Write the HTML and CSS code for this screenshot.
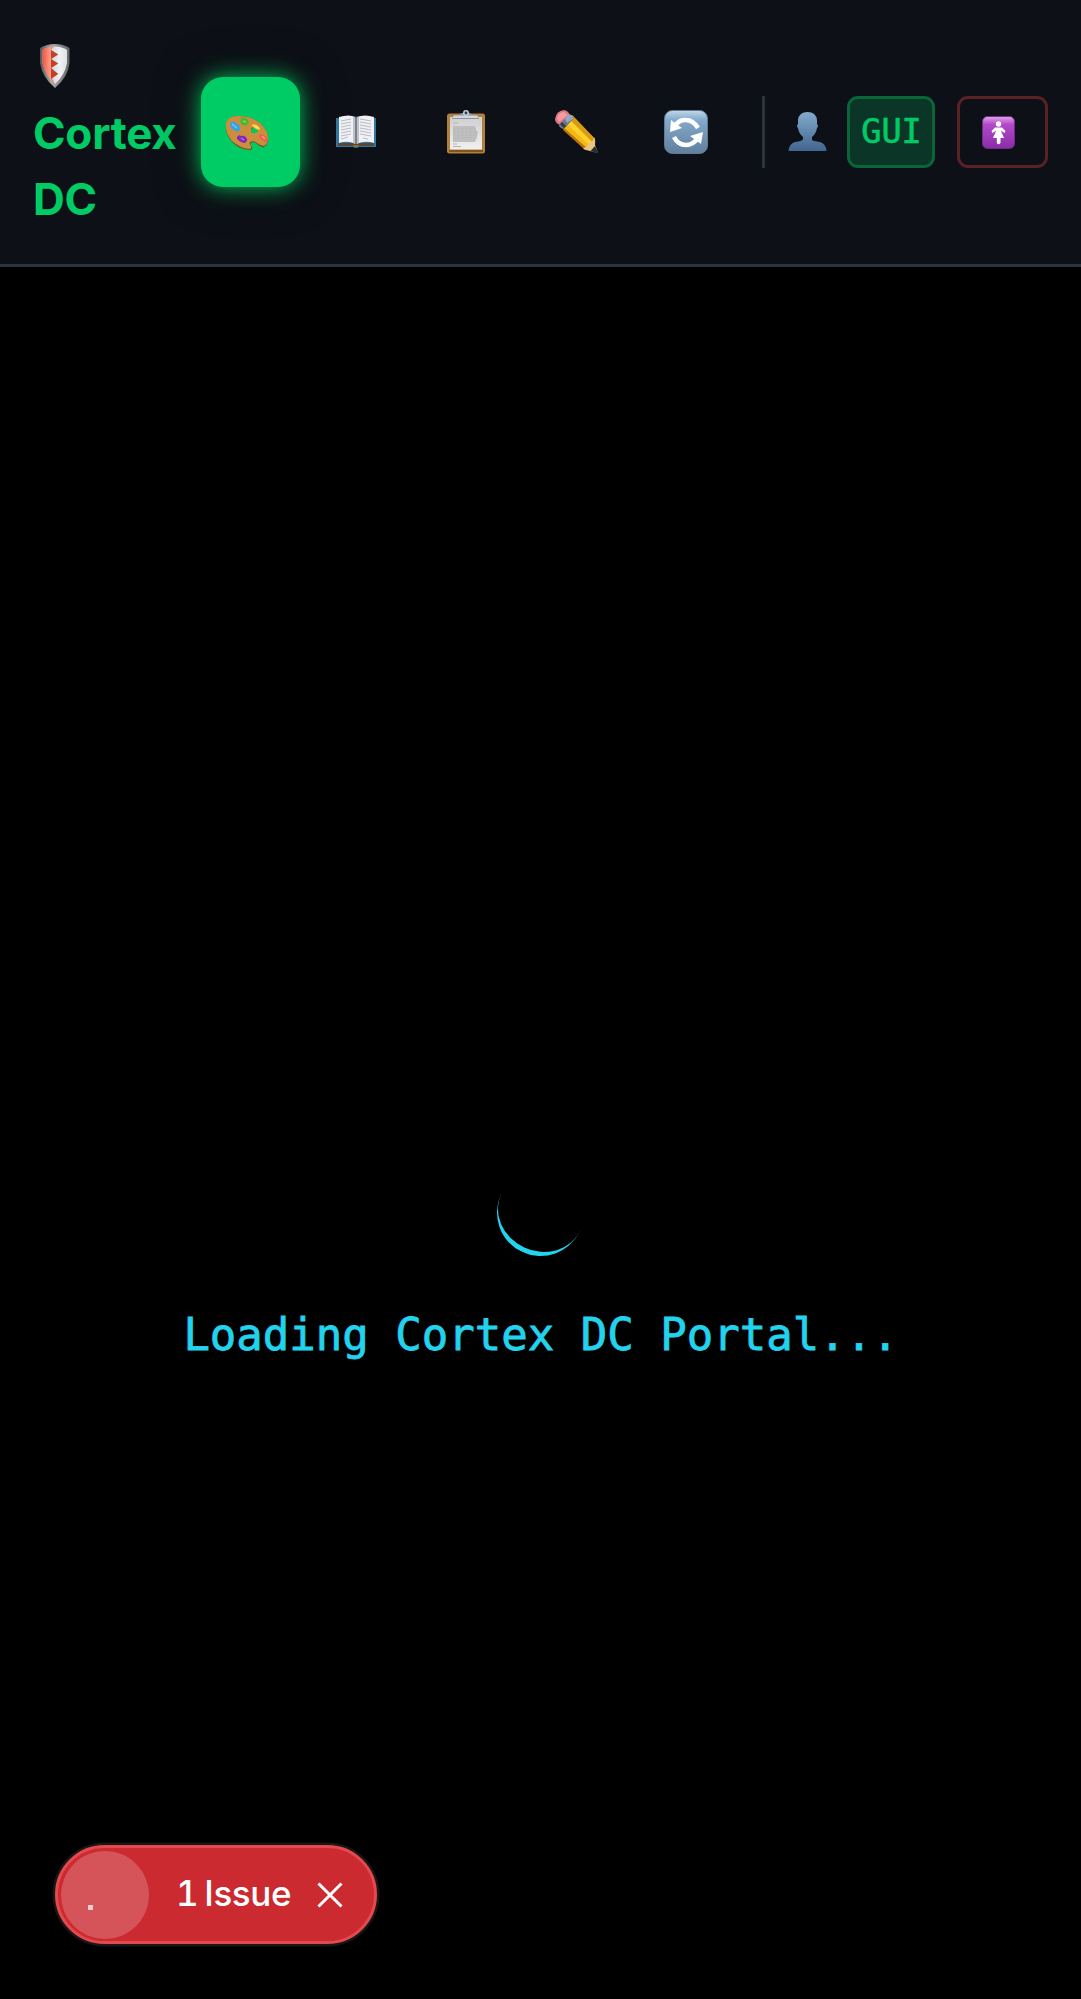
FILE: index.html
```html
<!DOCTYPE html>
<html lang="en">
<head>
<meta charset="utf-8">
<title>Cortex DC Portal</title>
<link rel="stylesheet" href="styles.css">
</head>
<body>
<header class="header">
  <div class="brand">
    <div class="brand-mark">
      <svg width="32" height="46" viewBox="0 0 32 46">
        <defs>
          <linearGradient id="rim" x2="1"><stop stop-color="#555"/><stop offset=".4" stop-color="#aaa"/><stop offset="1" stop-color="#666"/></linearGradient>
          <linearGradient id="red" x2="1"><stop stop-color="#f0553f"/><stop offset=".5" stop-color="#ff9c86"/><stop offset="1" stop-color="#d33c22"/></linearGradient>
          <linearGradient id="silver" x2="1"><stop stop-color="#b3b9bf"/><stop offset=".7" stop-color="#eef2f5"/><stop offset="1" stop-color="#dde2e6"/></linearGradient>
        </defs>
        <path d="M16 1Q24 1 30.500 5V20Q29 34 16 45Q3 34 1 20V5Q8 1 16 1Z" fill="url(#rim)"/>
        <path d="M16 3.500Q23 3.500 28 7V20Q26 32 16 41Q6 32 3.500 20V7Q9 3.500 16 3.500Z" fill="url(#silver)"/>
        <path d="M15 3.600L12 7L19 11.500L12 16L19 20.500L12 25L19 31L13 35L16 41Q6 32 3.500 20V7Q8 4 15 3.600Z" fill="url(#red)"/>
        <path d="M12 7L19 11.500L12 16L19 20.500L12 25L19 31L12 36V7Z" fill="#c24128"/>
      </svg>
    </div>
    <div>Cortex</div>
    <div>DC</div>
  </div>
  <nav class="nav">
    <button class="nav-item active" aria-label="GUI">
      <svg width="44" height="44" viewBox="0 0 44 44">
        <path d="M1 15Q2 6 14 6Q28 6 37 15Q43 22 43 28Q43 35 39 37Q36 38 32 34Q28 31 26 33Q25 35 27 37Q28 40 25 40Q15 40 7 32Q0 24 1 15ZM26 21Q26 24 30 24Q33 23 33 20Q31 18 28 18Q26 19 26 21Z" fill="#75512a" fill-rule="evenodd"/>
        <path d="M1 14Q2 5.500 14 6Q28 6 37 15Q43 22 43 27Q43 34 39 36Q36 36 32 33Q28 30 25 32Q24 34 26 36Q27 39 24 39Q15 38 7 31Q0 23 1 14ZM26 20Q26 24 30 23Q33 23 33 20Q31 17 28 17Q26 18 26 20Z" fill="#cc8d3c" fill-rule="evenodd"/>
        <path d="M5 13Q8 10 11 13Q16 15 15 20Q12 23 9 20Q5 19 5 13Z" fill="#36a4e1"/>
        <path d="M16 8Q19 6 22 9Q25 12 22 15Q18 17 15 12Z" fill="#48b82c"/>
        <path d="M28 14Q31 14 34 17Q36 19 34 20Q30 19 27 16Z" fill="#f5d13a"/>
        <path d="M12 27Q14 24 16 26Q20 25 22 29Q23 30 20 33Q16 33 12 29Z" fill="#8426c0"/>
        <path d="M34 25Q37 23 40 26Q44 30 42 32Q38 32 34 27Z" fill="#ed5e4c"/>
        <path d="M7 14L12 18M18 11L21 12M30 16L33 18M16 28L19 30M37 26L40 29" stroke="#fff" stroke-opacity=".35" stroke-width="1.500"/>
      </svg>
    </button>
    <button class="nav-item" aria-label="Docs">
      <svg width="44" height="44" viewBox="0 0 44 44">
        <path d="M1 8H41V37H24Q21 39 18 37H1Z" fill="#32779e"/>
        <path d="M3 33H39V36H24Q21 37 18 36H3Z" fill="#55483a"/>
        <path d="M4 7Q14 4 20.500 7V34Q13 30 4 33Z" fill="#f0f1f5"/>
        <path d="M21.500 7Q30 4 39 7V33Q30 30 21.500 34Z" fill="#f0f1f5"/>
        <path d="M19 7V33M23 7V33" stroke="#aeb0b9" stroke-width="1.500"/>
        <path d="M21 6V34" stroke="#555" stroke-width="1"/>
        <path d="M6 11L16 9M6 14L16 12M6 17L16 15M6 20L16 18M6 23L16 21M6 26L16 24M6 29L13 27M25 9L36 11M25 12L36 14M25 15L36 17M25 18L36 20M25 21L36 23M25 24L36 26M28 28L33 29" stroke="#b9bac3" stroke-width="1"/>
        <path d="M18 35H24L23 37H19Z" fill="#92701c"/>
      </svg>
    </button>
    <button class="nav-item" aria-label="Projects">
      <svg width="44" height="44" viewBox="0 0 44 44">
        <defs><linearGradient id="paper" y2="1" x2="0"><stop stop-color="#cfcfcf"/><stop offset="1" stop-color="#f0f0f0"/></linearGradient></defs>
        <rect x="2" y="3.500" width="38" height="40" rx="2.500" fill="#b1803f"/>
        <path d="M4 40H38V42H4Z" fill="#80531f"/>
        <path d="M5 7H37V39.500H5Z" fill="url(#paper)"/>
        <path d="M8 16H30L31 20L33 22L32 27L30 32H8Z" fill="#bfbfbf"/>
        <path d="M8 13H13M8 34H12M8 36.500H16" stroke="#b5b5b5"/>
        <path d="M8 19H31M8 22H31M8 25H31M8 28H30" stroke="#b7b7b7" stroke-dasharray="3 1"/>
        <path d="M7 9Q7 5 13 5L17 3H25L28 5Q34 5 34 9Z" fill="#8d949c"/>
        <path d="M9 5.500H32L34 8H7Z" fill="#d1d6da"/>
        <circle cx="21" cy="3" r="2.200" fill="#333a42" stroke="#bed0df" stroke-width="1.600"/>
      </svg>
    </button>
    <button class="nav-item" aria-label="Create">
      <svg width="44" height="44" viewBox="0 0 44 44">
        <path d="M17 5L40 29L31 39L8 18Z" fill="#f4b915"/>
        <path d="M17 5L40 29L37 32L14 9Z" fill="#d99b13"/>
        <path d="M14 9L37 32L34 35L11 13Z" fill="#ffd12c"/>
        <path d="M9 18L32 38L29 39L8 20Z" fill="#bb750b"/>
        <path d="M39 27Q41 31 40 35L43 43L31 40Q27 39 29 38Q33 36 33 33Q38 33 39 27Z" fill="#e8c583"/>
        <path d="M40 36L43.500 43.500L35.500 41Z" fill="#272d37"/>
        <path d="M0 9Q1 1 9 0Q14 1 15 6L5 15Q0 13 0 9Z" fill="#df7582"/>
        <path d="M2 9Q3 2 9 2L13 5L4 12Z" fill="#f59ba1"/>
        <path d="M14 5L19 8L9 19Q4 18 4 15Z" fill="#697685"/>
        <path d="M14 4Q18 5 18 9L12 13L10 9Z" fill="#91a9c5"/>
        <path d="M6 13L10 17" stroke="#343a40" stroke-width="3"/>
      </svg>
    </button>
    <button class="nav-item refresh" aria-label="Refresh">
      <svg width="44" height="44" viewBox="0 0 44 44">
        <defs><linearGradient id="tile" y2="1" x2="0"><stop stop-color="#c1d8ea"/><stop offset=".22" stop-color="#83a9cb"/><stop offset="1" stop-color="#617f9d"/></linearGradient></defs>
        <rect x=".5" y=".5" width="43" height="43" rx="8" fill="url(#tile)" stroke="#617b92"/>
        <path d="M10 17Q15 9 22 10Q29 10 34 18" fill="none" stroke="#fff" stroke-width="4.500"/>
        <path d="M7 10L6 22L18 18Z" fill="#fff"/>
        <path d="M10 27Q14 35 22 35Q29 35 34 28" fill="none" stroke="#fff" stroke-width="4.500"/>
        <path d="M39 22L37 34L26 26Z" fill="#fff"/>
      </svg>
    </button>
  </nav>
  <div class="account">
    <svg class="person" width="44" height="44" viewBox="0 0 44 44">
      <defs><linearGradient id="bust" y2="1" x2="0"><stop stop-color="#83aacb"/><stop offset="1" stop-color="#41658f"/></linearGradient></defs>
      <path d="M21.500 2Q30 2 31 10V14Q33 16 31 18Q30 24 26 27V30Q27 31 34 32Q40 34 40.500 41H2.500Q3 34 9 32Q17 31 17 29V27Q13 24 12 18Q10 16 12 14V10Q13 2 21.500 2Z" fill="url(#bust)"/>
    </svg>
    <span class="badge">GUI</span>
    <button class="logout" aria-label="Log out">
      <svg width="33" height="33" viewBox="0 0 33 33">
        <defs><linearGradient id="violet" y2="1" x2="0"><stop stop-color="#dfa6e9"/><stop offset=".25" stop-color="#b249c9"/><stop offset="1" stop-color="#8a2ca8"/></linearGradient></defs>
        <rect x=".5" y=".5" width="32" height="32" rx="5" fill="url(#violet)" stroke="#712b88"/>
        <circle cx="16.500" cy="8" r="2.700" fill="#fff"/>
        <path d="M13 11.500H20L23.500 15L22.500 17L18.800 14.500L22 22H18.500V27Q16.500 29.500 14.800 27V22H11L14.200 14.500L10.500 17L9.500 15Z" fill="#fff"/>
      </svg>
    </button>
  </div>
</header>
<main class="loading">
  <div class="spinner"></div>
  <div class="loading-text">Loading Cortex DC Portal...</div>
</main>
<aside class="issues">
  <span class="issues-mark"><i class="dot"></i></span>
  <span class="issues-text">1 Issue</span>
  <svg class="close" width="26" height="26" viewBox="0 0 26 26"><path d="M1.500 1.500L24.500 24.500M24.500 1.500L1.500 24.500" stroke="#fff" stroke-width="3"/></svg>
</aside>
</body>
</html>
```
FILE: styles.css
```css
* { box-sizing: border-box; }
body {
  margin: 0;
  height: 1999px;
  display: flex;
  flex-direction: column;
  background: #000;
  font-family: Inter, sans-serif;
  overflow: hidden;
}
button { font: inherit; background: none; border: 0; padding: 0; }
svg { display: block; overflow: visible; flex: none; }
.header {
  flex: none;
  height: 267px;
  padding: 0 33px;
  display: flex;
  align-items: center;
  background: #0d1017;
  border-bottom: 3px solid #2d333e;
}
.brand {
  width: 168px;
  padding-top: 2px;
  color: #00cc66;
  font-size: 44px;
  line-height: 66px;
  font-weight: 700;
  letter-spacing: -.2px;
}
.brand-mark { height: 66px; padding: 9px 0 0 6px; }
.nav { display: flex; gap: 11px; }
.nav-item {
  width: 99px;
  height: 110px;
  padding-left: 24px;
  border-radius: 22px;
  display: flex;
  align-items: center;
}
.nav-item.refresh { padding-left: 23px; }
.nav-item.active {
  background: #00cc66;
  box-shadow: 0 0 22px rgba(0, 204, 102, .95), 0 0 44px rgba(10, 20, 8, .6);
}
.account {
  margin-left: auto;
  height: 72px;
  display: flex;
  align-items: center;
  border-left: 3px solid #2d333e;
  padding-left: 21px;
}
.badge {
  width: 88px;
  height: 72px;
  margin: 0 22px 0 17px;
  padding-left: 1px;
  border: 3px solid #086638;
  border-radius: 11px;
  background: #0b3526;
  color: #00cc66;
  font: 33.500px/66px "DejaVu Sans Mono", monospace;
  -webkit-text-stroke: .6px #00cc66;
  text-align: center;
}
.logout {
  width: 91px;
  height: 72px;
  padding-left: 22px;
  border: 3px solid #5a2227;
  border-radius: 11px;
  display: flex;
  align-items: center;
}
.loading {
  flex: 1;
  display: flex;
  flex-direction: column;
  align-items: center;
  padding-top: 902px;
}
.spinner {
  width: 87px;
  height: 87px;
  border-radius: 50%;
  border-bottom: 5.5px solid #22d3ee;
  transform: rotate(25deg);
}
.loading-text {
  margin-top: 46px;
  padding-left: 1px;
  color: #22d3ee;
  font: 44px/66px "DejaVu Sans Mono", monospace;
  -webkit-text-stroke: .8px #22d3ee;
  white-space: pre;
}
.issues {
  flex: none;
  align-self: flex-start;
  width: 322px;
  height: 99px;
  margin: 0 0 55px 55px;
  padding-left: 3px;
  display: flex;
  align-items: center;
  border: 3px solid #e5484d;
  border-radius: 50px;
  background: #ca2a30;
  box-shadow: 0 0 0 2.5px #171717;
}
.issues-mark {
  width: 88px;
  height: 88px;
  border-radius: 50%;
  background: #d5545a;
  padding: 54px 0 0 27px;
}
.dot { display: block; width: 5px; height: 5px; background: #f3ced0; }
.issues-text {
  width: 122px;
  margin-left: 27px;
  padding-bottom: 3px;
  color: #fff;
  font-size: 35px;
  font-weight: 500;
  letter-spacing: -.4px;
  word-spacing: -3px;
  font-feature-settings: "tnum";
  white-space: nowrap;
}
.close { margin-left: 19px; }
```
